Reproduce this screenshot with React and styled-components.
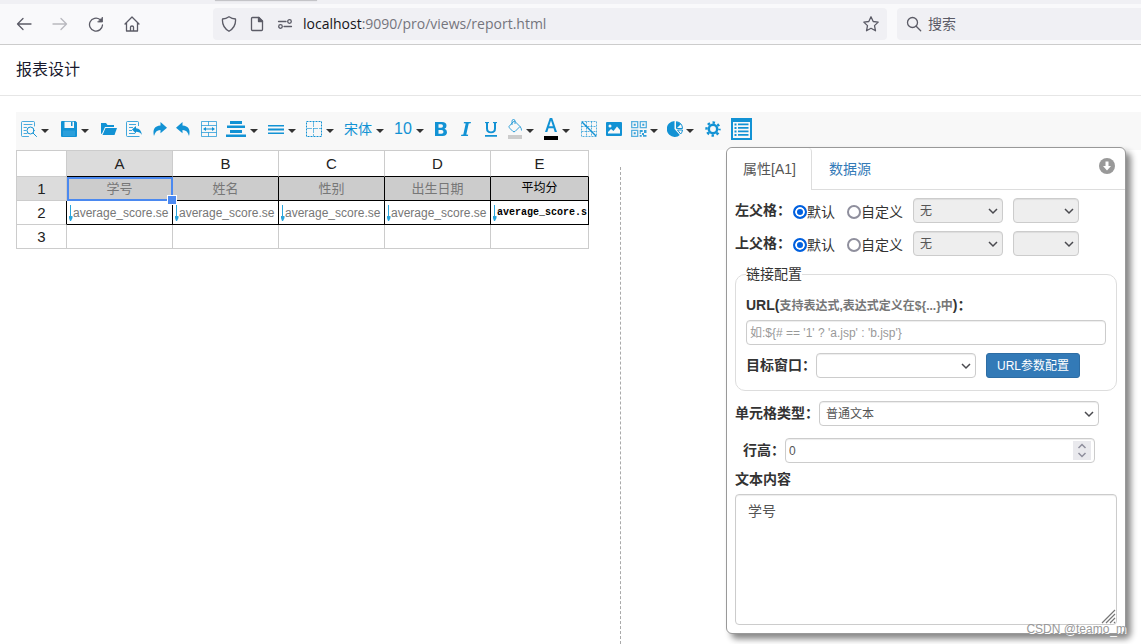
import React, { useState } from 'react';
import styled, { createGlobalStyle, css } from 'styled-components';

const colors = {
  icon: '#1292d4',
  chrome: '#5b5b66',
  field: '#f0f0f4',
  grid: '#ccc',
  link: '#337ab7',
  text: '#333',
};

const sans = '"Liberation Sans", "Noto Sans CJK SC", sans-serif';

const GlobalStyle = createGlobalStyle`
  * {
    box-sizing: border-box;
  }

  body {
    margin: 0;
    background: #fff;
    color: ${colors.text};
    font: 14px/20px ${sans};
  }

  button,
  input,
  select,
  textarea {
    font-family: inherit;
    margin: 0;
  }
`;

const Page = styled.div`
  position: relative;
  min-height: 100vh;
  display: flex;
  flex-direction: column;
  overflow: hidden;
`;

const TabStrip = styled.div`
  height: 4px;
  padding-left: 215px;
  background: ${colors.field};
`;

const TabEdge = styled.div`
  width: 102px;
  height: 1px;
  background: #c4c4c8;
  box-shadow: 0 0 1px #bbb;
`;

const NavBar = styled.nav`
  display: flex;
  align-items: center;
  height: 41px;
  padding-left: 16px;
  background: #f9f9fb;
  border-bottom: 1px solid #ccc;
`;

const NavButtons = styled.div`
  display: flex;
  gap: 20px;
  flex: 0 0 197px;
`;

const IconButton = styled.button`
  display: flex;
  align-items: center;
  gap: ${p => (p.$tight ? 3 : 4)}px;
  padding: 0;
  border: 0;
  background: none;
  color: ${p => p.$color || colors.chrome};
  cursor: pointer;

  &:disabled {
    opacity: 0.4;
  }
`;

const AddressBar = styled.div`
  display: flex;
  align-items: center;
  flex: 1 1 auto;
  gap: 12px;
  height: 32px;
  padding: 0 8px;
  margin-right: 10px;
  border-radius: 4px;
  background: ${colors.field};
  color: ${colors.chrome};
`;

const ChromeInput = styled.input`
  flex: 1;
  min-width: 0;
  padding: 0;
  border: 0;
  background: none;
  font: 14px/20px 'Noto Sans', 'Noto Sans CJK SC', sans-serif;

  &::placeholder {
    color: ${colors.chrome};
    opacity: 1;
  }
`;

const Address = styled.div`
  flex: 1;
  margin-left: -2px;
  font: 14px/20px 'Open Sans', sans-serif;
  color: #75757d;

  b {
    font-weight: 400;
    color: #15141a;
  }
`;

const SearchBar = styled.label`
  display: flex;
  align-items: center;
  gap: 6px;
  flex: 0 0 244px;
  height: 32px;
  padding-left: 9px;
  border-radius: 4px 0 0 4px;
  background: ${colors.field};
  color: ${colors.chrome};
`;

const Title = styled.h1`
  margin: 0;
  padding: 13px 16px;
  border-bottom: 1px solid #e6e6e6;
  font-size: 16px;
  line-height: 24px;
  font-weight: 400;
  color: #1a1a2e;
`;

const Main = styled.main`
  flex: 1;
  display: flex;
  flex-direction: column;
  padding: 16px 0 0 16px;
`;

const Toolbar = styled.div`
  display: flex;
  align-items: center;
  gap: 9px;
  height: 38px;
  padding: 0 5px 4px;
  background: #f8f8f8;
`;

const ToolGroup = styled.div`
  display: flex;
  align-items: center;
  gap: ${p => p.$gap || 9}px;
  padding-left: ${p => p.$lead || 0}px;
`;

const ToolText = styled.span`
  font-size: ${p => p.$size || 14}px;
  line-height: 20px;
`;

const Workspace = styled.div`
  flex: 1;
  display: flex;
`;

const Sheet = styled.section`
  flex: 0 1 604px;
`;

const Splitter = styled.div`
  flex: 1;
  margin-top: 17px;
  border-left: 1px dashed #aaa;
`;

const Grid = styled.table`
  table-layout: fixed;
  width: 573px;
  border-collapse: separate;
  border-spacing: 0;
  border-top: 1px solid ${colors.grid};
  border-left: 1px solid ${colors.grid};
  color: #222;

  th {
    font-size: 15px;
    font-weight: 400;
  }

  th,
  td {
    height: 24px;
    padding: 0;
    line-height: 20px;
    border-right: 1px solid ${colors.grid};
    border-bottom: 1px solid ${colors.grid};
    text-align: center;
  }

  thead th {
    height: 26px;
  }
`;

const HeadCell = styled.th`
  && {
    background: ${p => (p.$active ? '#dcdcdc' : '#fff')};
    ${p => p.$bottom && 'border-bottom-color: #000;'}
    ${p => p.$right && 'border-right-color: #000;'}
  }
`;

const Cell = styled.td`
  && {
    position: relative;
    font-size: 13px;
    color: #777;
    white-space: nowrap;

    ${p =>
      p.$bordered &&
      css`
        border-color: #000;
      `}
    ${p =>
      p.$header &&
      css`
        background: #ccc;
      `}
    ${p =>
      p.$plain &&
      css`
        font-family: 'Liberation Mono', 'Noto Sans CJK SC', monospace;
        font-size: 12px;
        color: #000;
      `}
  }
`;

const Binding = styled.div`
  display: flex;
  align-items: center;
  padding-left: 2px;
  font-size: ${p => (p.$plain ? 10 : 12)}px;
  font-weight: ${p => (p.$plain ? 700 : 400)};

  svg {
    flex: none;
  }
`;

const Selection = styled.div`
  position: absolute;
  inset: 0 -1px -1px 0;
  z-index: 1;
  border: 2px solid #4b89f0;

  &::after {
    content: '';
    position: absolute;
    right: -6px;
    bottom: -6px;
    width: 8px;
    height: 8px;
    border: 1px solid #fff;
    background: #4b89f0;
  }
`;

const Panel = styled.aside`
  position: absolute;
  top: 147px;
  right: 15px;
  z-index: 2;
  width: 400px;
  border: 1px solid #999;
  border-radius: 6px;
  background: #fff;
  box-shadow: 5px 5px 6px #888;
`;

const Tabs = styled.div`
  display: flex;
  height: 42px;
  border-bottom: 1px solid #ddd;
`;

const Tab = styled.button`
  height: 42px;
  padding: 0 ${p => (p.$active ? '15px 0 16px' : '17px')};
  border: 0;
  border-right: 1px solid ${p => (p.$active ? '#ddd' : 'transparent')};
  border-radius: 6px 4px 0 0;
  background: ${p => (p.$active ? '#fff' : 'transparent')};
  color: ${p => (p.$active ? '#555' : colors.link)};
  font-size: 14px;
  line-height: 20px;
`;

const Collapse = styled(IconButton)`
  align-self: flex-start;
  margin: 10px 10px 0 auto;
`;

const PanelBody = styled.div`
  display: flex;
  flex-direction: column;
  padding: 8px;
`;

const FormRow = styled.div`
  display: flex;
  align-items: center;
  height: 25px;
  margin-bottom: ${p => p.$space || 0}px;
  padding-left: ${p => p.$indent || 0}px;
`;

const Label = styled.label`
  font-weight: 700;
  line-height: 20px;
  white-space: nowrap;

  ${FormRow} > & {
    padding-bottom: 2px;
  }
`;

const Hint = styled.span`
  font-size: 12px;
  color: #777;
`;

const Option = styled.label`
  display: flex;
  align-items: center;
  padding-top: 2px;
  margin: 0 ${p => (p.$last ? 10 : 12)}px 0 ${p => (p.$last ? 0 : 2)}px;
`;

const Radio = styled.input.attrs({ type: 'radio' })`
  appearance: none;
  width: 14px;
  height: 14px;
  border: 2px solid #8f8f9d;
  border-radius: 50%;
  background: #fff;

  &:checked {
    border-color: #0060df;
    background: #0060df;
    box-shadow: inset 0 0 0 2px #fff;
  }
`;

const fieldBox = css`
  border: 1px solid #ccc;
  border-radius: 4px;
  background: #fff;
  color: #555;
  font-size: 12px;
  line-height: 16px;
  box-shadow: inset 0 1px 1px rgba(0, 0, 0, 0.075);
  outline: none;
`;

const SelectBox = styled.div`
  position: relative;
  width: ${p => p.$width}px;
  margin-right: 10px;

  select {
    ${fieldBox}
    appearance: none;
    display: block;
    width: 100%;
    height: 25px;
    padding: 0 6px;
    opacity: 1;
  }

  select:disabled {
    background: #eee;
  }

  svg {
    position: absolute;
    top: 8px;
    right: 5px;
    pointer-events: none;
  }
`;

const TextField = styled.input`
  ${fieldBox}
  width: 100%;
  height: 25px;
  padding: 0 3px;

  &::placeholder {
    color: #999;
    opacity: 1;
  }

  &::-webkit-inner-spin-button {
    appearance: none;
  }
`;

const NumberBox = styled.div`
  position: relative;
  width: 310px;
`;

const Stepper = styled.span`
  position: absolute;
  top: 3px;
  right: 4px;
  display: flex;
  width: 18px;
  height: 19px;
  background: #e9e9ed;
`;

const LinkSet = styled.fieldset`
  min-width: 0;
  margin: 0 0 10px;
  padding: 11px 10px 12px;
  border: 1px solid #ddd;
  border-radius: 10px;

  legend {
    padding: 0;
    line-height: 20px;
  }

  ${TextField} {
    display: block;
    margin: 4px 0 8px;
  }

  ${FormRow} {
    margin: 0;
  }
`;

const PrimaryButton = styled.button`
  height: 25px;
  padding: 0 10px;
  border: 1px solid #2e6da4;
  border-radius: 3px;
  background: ${colors.link};
  color: #fff;
  font-size: 12px;
  line-height: 18px;
`;

const AreaBox = styled.div`
  position: relative;
  margin-top: 5px;

  textarea {
    ${fieldBox}
    display: block;
    width: 100%;
    height: 131px;
    padding: 6px 12px;
    font-size: 14px;
    line-height: 20px;
    resize: none;
  }

  svg {
    position: absolute;
    right: 1px;
    bottom: 1px;
  }
`;

const Watermark = styled.div`
  position: absolute;
  right: 15px;
  bottom: 6px;
  z-index: 3;
  font-size: 12px;
  line-height: 18px;
  color: #999;
  text-shadow: 1px 1px 0 #fff;
`;

const Line = ({ size = 16, width = 1.3, children }) => (
  <svg
    width={size}
    height={size}
    viewBox="0 0 16 16"
    fill="none"
    stroke="currentColor"
    strokeWidth={width}
    strokeLinecap="round"
    strokeLinejoin="round"
    aria-hidden="true"
  >
    {children}
  </svg>
);

const Solid = ({ w = 16, h = 16, children }) => (
  <svg
    width={w}
    height={h}
    viewBox={`0 0 ${w} ${h}`}
    fill="currentColor"
    aria-hidden="true"
  >
    {children}
  </svg>
);

const Caret = () => (
  <svg width="8" height="20" viewBox="0 0 8 20" aria-hidden="true">
    <path d="M0 10h8l-4 4z" fill="#333" />
  </svg>
);

const Chevron = () => (
  <svg width="10" height="10" viewBox="0 0 10 10" aria-hidden="true">
    <path d="M1 3l4 4 4-4" fill="none" stroke="#4a4a4f" strokeWidth="1.5" />
  </svg>
);

const PreviewIcon = () => (
  <Line width={1}>
    <path
      d="M13.5 5V1.5q0-1-1-1h-11q-1 0-1 1v13q0 1 1 1h6M3 3.5h8M3 6.5h2.500M3 9.5h2M3 12.5h3"
      strokeOpacity="0.75"
    />
    <circle cx="9.500" cy="9.500" r="3.500" />
    <path d="M12 12l3.500 3.500" />
  </Line>
);

const SaveIcon = () => (
  <Solid>
    <path
      fillRule="evenodd"
      d="M1 0H14.500L16 1.500V15q0 1-1 1H1q-1 0-1-1V1Q0 0 1 0zM3.500 .7v6.300h9.500V.7z"
    />
    <path d="M10 1h1.500v4H10z" />
    <path d="M2 9.500h12V15H2z" fill="#2b9fdb" />
  </Solid>
);

const OpenIcon = () => (
  <Solid>
    <path d="M0 2h5l1.500 2H13v2H4L1 12.500 0 13z" />
    <path d="M4.500 7H16l-2.500 7H1.500z" />
  </Solid>
);

const ImportIcon = () => (
  <Solid>
    <path
      d="M12.500 5V1.500q0-1-1-1h-10q-1 0-1 1v13q0 1 1 1h12M3 3.500h7M3 6.500h4M3 9.500h3M3 12.500h6"
      fill="none"
      stroke="currentColor"
      strokeOpacity="0.8"
    />
    <path d="M6 8.500L10 5v2.200q5 .3 6 6.800-2-3.300-6-3.300V12.500z" />
  </Solid>
);

const arrowPath = 'M9.500 1L16 6.700 9.500 12.300V9Q4.500 8.800 3 15 .5 5 9.500 4.400z';

const RedoIcon = () => (
  <Solid>
    <path d={arrowPath} />
  </Solid>
);

const UndoIcon = () => (
  <Solid>
    <path d={arrowPath} transform="matrix(-1 0 0 1 16 0)" />
  </Solid>
);

const MergeIcon = () => (
  <Solid>
    <path
      d="M.5 .5h15v15H.5zM.5 4.500h15M.5 11.500h15M7.500 .5v4M7.500 11.500v4"
      fill="none"
      stroke="currentColor"
      strokeOpacity="0.7"
    />
    <path d="M2 8l3-2v1.400h6V6l3 2-3 2V8.600H5V10z" />
  </Solid>
);

const AlignIcon = () => (
  <Solid w={20}>
    <path d="M4 0h12v3H4zM1 4.500h18v2.500H1zM4 9h12v3H4zM0 13.500h20V16H0z" />
  </Solid>
);

const VAlignIcon = () => (
  <Solid>
    <path d="M0 4h16v1.500H0zM0 7.500h16V9.500H0zM0 11.500h16V13H0z" />
  </Solid>
);

const BorderIcon = () => (
  <svg width="16" height="16" viewBox="0 0 16 16" fill="none" aria-hidden="true">
    <path
      d="M.5 .5h15v15H.5z"
      stroke={colors.icon}
      strokeDasharray="2 1"
    />
    <path
      d="M1 7.500h14M7.500 1v14"
      stroke={colors.icon}
      strokeOpacity="0.6"
      strokeDasharray="5 1"
    />
  </svg>
);

const BoldIcon = () => (
  <Solid>
    <path
      fillRule="evenodd"
      d="M2 1h7q4.500 0 4.500 3.700 0 2.400-2 3.100Q14 8.500 14 11.300 14 15 9.500 15H2zM5.500 3.300v3.500H8.300q1.700 0 1.700-1.700T8.300 3.300zM5.500 9v3.700h3q2 0 2-1.800T8.500 9z"
    />
  </Solid>
);

const ItalicIcon = () => (
  <Solid>
    <path d="M6 1h7l-.3 1.300-2 .3L8.300 13.400l1.900.3L9.900 15H3l.3-1.300 2-.3L7.700 2.600 5.700 2.300z" />
  </Solid>
);

const UnderlineIcon = () => (
  <Solid>
    <path d="M2 1h4v1L5 2.300V7.500Q5 10.500 8 10.500T11 7.500V2.300L10 2V1h4v1l-1 .3V7.500Q13 12.300 8 12.300T3 7.500V2.300L2 2zM2 14h12v1.700H2z" />
  </Solid>
);

const FillIcon = () => (
  <svg width="14" height="20" viewBox="0 0 14 20" aria-hidden="true">
    <g fill="none" stroke={colors.icon} strokeOpacity="0.85">
      <path d="M5 3L1 7.500q0 1 1 2l3 3q1 .5 2 0l5-5L6.500 2z" />
      <path d="M4 6V2q0-1.500 1.500-1.500T7 2v3M12 7.500q1.500 1.500 1.500 4" />
    </g>
    <path d="M0 16h14v4H0z" fill="#ccc" />
  </svg>
);

const ColorIcon = () => (
  <svg width="14" height="24" viewBox="0 0 14 24" aria-hidden="true">
    <path
      fillRule="evenodd"
      d="M5.800 1h2.400L13 15H10.700L9.500 11.200H4.500L3.300 15H1zM7 3.600L5.100 9.300h3.800z"
      fill={colors.icon}
    />
    <path d="M0 19h14v4H0z" />
  </svg>
);

const DiagonalIcon = () => (
  <svg width="16" height="16" viewBox="0 0 16 16" fill="none" aria-hidden="true">
    <g stroke={colors.icon}>
      <path
        d="M.5.5h15v15H.5zM.5 5.500h15M.5 10.500h15M5.500 .5v15M10.500 .5v15"
        strokeDasharray="2 1"
        strokeOpacity="0.7"
      />
      <path d="M1 1l14 14" strokeWidth="1.400" />
    </g>
  </svg>
);

const ImageIcon = () => (
  <Solid>
    <path
      fillRule="evenodd"
      d="M1 1h14q1 0 1 1v12q0 1-1 1H1q-1 0-1-1V2q0-1 1-1zM2 12.500h12V9L11 5.500 7.500 10 5 8l-3 3zM4 3.500a1.500 1.500 0 100 3 1.500 1.500 0 000-3z"
    />
  </Solid>
);

const QrIcon = () => (
  <Solid>
    <path
      d="M.7.7h6v6h-6zM9.300.7h6v6h-6zM.7 9.300h6v6h-6z"
      fill="none"
      stroke="currentColor"
      strokeWidth="1.300"
      strokeOpacity="0.700"
    />
    <path
      d="M2.700 2.700h2v2h-2zM11.300 2.700h2v2h-2zM2.700 11.300h2v2h-2zM8.700 9h3v2h-2v2h-1zM13 9h2.500v3H13zM11 12h2v2h2.500v1.700H12V14h-1zM8.700 14h2v1.700h-2z"
      fillOpacity="0.85"
    />
  </Solid>
);

const PieIcon = () => (
  <Solid>
    <path d="M7.500 0v8l5.300 6Q11 16 8 16A8 8 0 017.500 0z" />
    <path
      d="M9.500 .7q5.800 1 6 6.800h-6zM10.500 9h5q-.2 2.400-1.800 4z"
      fill="none"
      stroke="currentColor"
    />
    <path d="M9.500 .7q3 .6 4.300 2.600L9.500 7.500z" />
  </Solid>
);

const GearIcon = () => (
  <svg width="16" height="16" viewBox="0 0 16 16" fill="none" aria-hidden="true">
    <circle cx="8" cy="8" r="4.200" stroke={colors.icon} strokeWidth="2.500" />
    <circle
      cx="8"
      cy="8"
      r="6.500"
      stroke={colors.icon}
      strokeWidth="2.400"
      strokeDasharray="2.500 2.605"
      strokeDashoffset="1.250"
    />
  </svg>
);

const ListIcon = () => (
  <Solid w={21} h={22}>
    <path
      fillRule="evenodd"
      d="M0 0h21v22H0zM2 4v16h17V4zM3.500 5.500h2v2h-2zM7 5.500h10.500v1.700H7zM3.500 9h2v2h-2zM7 9h10.500v1.700H7zM3.500 12.500h2v2h-2zM7 12.500h10.500v1.700H7zM3.500 16h2v2h-2zM7 16h10.500v1.700H7z"
    />
  </Solid>
);

const ExpandArrow = () => (
  <svg width="4" height="16" viewBox="0 0 4 16" fill="#2aa5dc" aria-hidden="true">
    <path d="M1 0h1v12H1zM0 11h3.500v2L2 16H1L0 13z" />
  </svg>
);

const Tool = ({ name, caret, tight, children }) => (
  <IconButton
    type="button"
    aria-label={name}
    $color={colors.icon}
    $tight={tight}
  >
    {children}
    {caret && <Caret />}
  </IconButton>
);

const Select = ({ width, id, label, disabled, children }) => (
  <SelectBox $width={width}>
    <select id={id} aria-label={label} disabled={disabled}>
      {children}
    </select>
    <Chevron />
  </SelectBox>
);

const ParentRow = ({ name, label }) => {
  const [mode, setMode] = useState('default');

  return (
    <FormRow $space={8} role="radiogroup" aria-labelledby={`${name}-label`}>
      <Label as="span" id={`${name}-label`}>
        {label}
      </Label>
      <Option>
        <Radio
          name={name}
          checked={mode === 'default'}
          onChange={() => setMode('default')}
        />
        默认
      </Option>
      <Option $last>
        <Radio
          name={name}
          checked={mode === 'custom'}
          onChange={() => setMode('custom')}
        />
        自定义
      </Option>
      <Select width={90} label={label} disabled={mode === 'default'}>
        <option>无</option>
      </Select>
      <Select width={66} label={label} disabled={mode === 'default'}>
        <option />
      </Select>
    </FormRow>
  );
};

const columns = ['A', 'B', 'C', 'D', 'E'];
const titles = ['学号', '姓名', '性别', '出生日期', '平均分'];

const Browser = () => (
  <header>
    <TabStrip>
      <TabEdge />
    </TabStrip>
    <NavBar>
      <NavButtons>
        <IconButton type="button" aria-label="back">
          <Line>
            <path d="M15 8H1.500M7 2.500L1.500 8 7 13.500" />
          </Line>
        </IconButton>
        <IconButton type="button" aria-label="forward" disabled>
          <Line>
            <path d="M1 8h13.500M9 2.500L14.500 8 9 13.500" />
          </Line>
        </IconButton>
        <IconButton type="button" aria-label="reload">
          <Line>
            <path d="M14.500 9A6.500 6.500 0 1112 3.500L13.500 5" />
            <path d="M14.500 1.500V6H10z" fill="currentColor" strokeWidth="0.8" />
          </Line>
        </IconButton>
        <IconButton type="button" aria-label="home">
          <Line>
            <path d="M1 8L8 1l7 7M2.500 7v8h11V7M6.500 15v-4q0-1 1.500-1t1.500 1v4" />
          </Line>
        </IconButton>
      </NavButtons>
      <AddressBar>
        <Line>
          <path d="M8 .7q3 2 6.500 2.300.7 8-6.500 12.300Q.8 11 1.500 3 5 2.700 8 .7z" />
        </Line>
        <Line>
          <path d="M3.500 1.500H10l3.500 3.500v8.500q0 1-1 1h-9q-1 0-1-1v-11q0-1 1-1z" />
          <path d="M9.500 1.500v4h4z" fill="currentColor" />
        </Line>
        <Line>
          <path d="M1.500 5.500H9M7 10.500h7.500" />
          <circle cx="12.500" cy="5.500" r="1.800" />
          <circle cx="3.500" cy="10.500" r="1.800" />
        </Line>
        <Address>
          <b>localhost</b>:9090/pro/views/report.html
        </Address>
        <IconButton type="button" aria-label="bookmark">
          <Line>
            <path d="M8 .8l2.200 4.700 5 .6-3.700 3.500 1 5.200L8 12.300l-4.500 2.500 1-5.200L.8 6.100l5-.6z" />
          </Line>
        </IconButton>
      </AddressBar>
      <SearchBar>
        <Line>
          <circle cx="6.500" cy="6.500" r="5" />
          <path d="M10.200 10.200l4.500 4.500" />
        </Line>
        <ChromeInput placeholder="搜索" aria-label="搜索" />
      </SearchBar>
    </NavBar>
  </header>
);

const DesignerToolbar = () => (
  <Toolbar role="toolbar">
    <ToolGroup $gap={12}>
      <Tool name="preview" caret>
        <PreviewIcon />
      </Tool>
      <Tool name="save" caret>
        <SaveIcon />
      </Tool>
      <Tool name="open">
        <OpenIcon />
      </Tool>
    </ToolGroup>
    <ToolGroup>
      <Tool name="import">
        <ImportIcon />
      </Tool>
      <Tool name="redo">
        <RedoIcon />
      </Tool>
      <Tool name="undo">
        <UndoIcon />
      </Tool>
      <Tool name="merge cells">
        <MergeIcon />
      </Tool>
    </ToolGroup>
    <ToolGroup $gap={10}>
      <Tool name="align" caret>
        <AlignIcon />
      </Tool>
      <Tool name="vertical align" caret>
        <VAlignIcon />
      </Tool>
      <Tool name="border" caret>
        <BorderIcon />
      </Tool>
      <Tool name="font" caret>
        <ToolText>宋体</ToolText>
      </Tool>
      <Tool name="font size" caret>
        <ToolText $size={16}>10</ToolText>
      </Tool>
    </ToolGroup>
    <ToolGroup>
      <Tool name="bold">
        <BoldIcon />
      </Tool>
      <Tool name="italic">
        <ItalicIcon />
      </Tool>
      <Tool name="underline">
        <UnderlineIcon />
      </Tool>
    </ToolGroup>
    <ToolGroup $gap={10}>
      <Tool name="background" caret>
        <FillIcon />
      </Tool>
      <Tool name="color" caret>
        <ColorIcon />
      </Tool>
    </ToolGroup>
    <ToolGroup $lead={2}>
      <Tool name="slash header">
        <DiagonalIcon />
      </Tool>
      <Tool name="image">
        <ImageIcon />
      </Tool>
      <Tool name="barcode" caret tight>
        <QrIcon />
      </Tool>
      <Tool name="chart" caret tight>
        <PieIcon />
      </Tool>
    </ToolGroup>
    <ToolGroup $lead={2} $gap={10}>
      <Tool name="settings">
        <GearIcon />
      </Tool>
      <Tool name="properties">
        <ListIcon />
      </Tool>
    </ToolGroup>
  </Toolbar>
);

const ReportGrid = () => (
  <Grid>
    <colgroup>
      <col width="50" />
      <col width="106" />
      <col width="106" />
      <col width="106" />
      <col width="106" />
      <col width="98" />
    </colgroup>
    <thead>
      <tr>
        <HeadCell />
        {columns.map(c => (
          <HeadCell key={c} scope="col" $active={c === 'A'} $bottom>
            {c}
          </HeadCell>
        ))}
      </tr>
    </thead>
    <tbody>
      <tr>
        <HeadCell scope="row" $active>
          1
        </HeadCell>
        {titles.map((title, i) => (
          <Cell key={title} $bordered $header $plain={i === 4}>
            {title}
            {i === 0 && <Selection />}
          </Cell>
        ))}
      </tr>
      <tr>
        <HeadCell scope="row" $right>
          2
        </HeadCell>
        {columns.map(c => (
          <Cell key={c} $bordered $plain={c === 'E'}>
            <Binding $plain={c === 'E'}>
              <ExpandArrow />
              {c === 'E' ? 'average_score.s' : 'average_score.se'}
            </Binding>
          </Cell>
        ))}
      </tr>
      <tr>
        <HeadCell scope="row">3</HeadCell>
        {columns.map(c => (
          <Cell key={c} />
        ))}
      </tr>
    </tbody>
  </Grid>
);

const PropertyPanel = () => (
  <Panel>
    <Tabs role="tablist">
      <Tab type="button" role="tab" aria-selected="true" $active>
        属性[A1]
      </Tab>
      <Tab type="button" role="tab" aria-selected="false">
        数据源
      </Tab>
      <Collapse type="button" aria-label="collapse" $color="#999">
        <svg width="16" height="16" viewBox="0 0 16 16" aria-hidden="true">
          <circle cx="8" cy="8" r="8" fill="currentColor" />
          <path d="M6.500 3.500h3V8H12l-4 4.500L4 8h2.500z" fill="#fff" />
        </svg>
      </Collapse>
    </Tabs>
    <PanelBody>
      <ParentRow name="left-parent" label="左父格：" />
      <ParentRow name="top-parent" label="上父格：" />

      <LinkSet>
        <legend>链接配置</legend>
        <Label htmlFor="url">
          URL(<Hint>支持表达式,表达式定义在{'${...}'}中</Hint>)：
        </Label>
        <TextField id="url" placeholder="如:${# == '1' ? 'a.jsp' : 'b.jsp'}" />
        <FormRow>
          <Label htmlFor="target">目标窗口：</Label>
          <Select width={160} id="target">
            <option />
          </Select>
          <PrimaryButton type="button">URL参数配置</PrimaryButton>
        </FormRow>
      </LinkSet>

      <FormRow $space={12}>
        <Label htmlFor="cell-type">单元格类型：</Label>
        <Select width={280} id="cell-type">
          <option>普通文本</option>
        </Select>
      </FormRow>
      <FormRow $space={6} $indent={8}>
        <Label htmlFor="row-height">行高：</Label>
        <NumberBox>
          <TextField id="row-height" type="number" defaultValue="0" />
          <Stepper>
            <svg width="18" height="19" viewBox="0 0 18 19" aria-hidden="true">
              <path
                d="M5.500 7L9 3.500 12.500 7M5.500 12L9 15.500 12.500 12"
                fill="none"
                stroke="#8f8f9d"
                strokeWidth="1.500"
              />
            </svg>
          </Stepper>
        </NumberBox>
      </FormRow>
      <Label htmlFor="content">文本内容</Label>
      <AreaBox>
        <textarea id="content" defaultValue="学号" />
        <svg width="15" height="15" viewBox="0 0 15 15" aria-hidden="true">
          <path
            d="M1 14L14 1M5 14l9-9M9 14l5-5M13 14l1-1"
            stroke="#777"
            strokeWidth="1.200"
          />
        </svg>
      </AreaBox>
    </PanelBody>
  </Panel>
);

const App = () => (
  <>
    <GlobalStyle />
    <Page>
      <Browser />
      <Title>报表设计</Title>
      <Main>
        <DesignerToolbar />
        <Workspace>
          <Sheet>
            <ReportGrid />
          </Sheet>
          <Splitter />
        </Workspace>
      </Main>
      <PropertyPanel />
      <Watermark>CSDN @teamo_m</Watermark>
    </Page>
  </>
);

export default App;
